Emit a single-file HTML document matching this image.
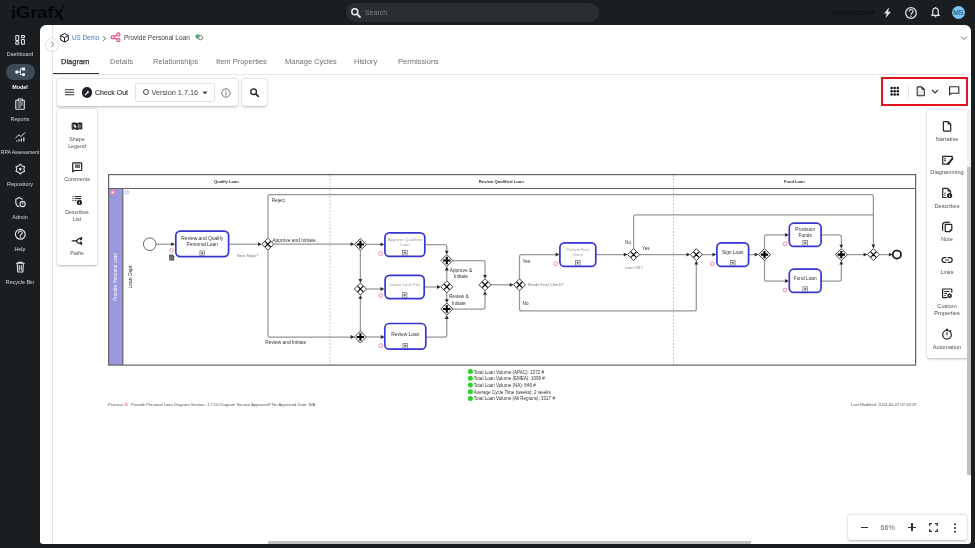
<!DOCTYPE html>
<html><head><meta charset="utf-8">
<style>
*{margin:0;padding:0;box-sizing:border-box}
html,body{width:975px;height:548px;overflow:hidden;background:#1b1e20;font-family:"Liberation Sans",sans-serif}
.a{position:absolute}
.t{position:absolute;white-space:nowrap;line-height:1}
.side{position:absolute;color:#d5d8dc;font-size:5.4px;text-align:center;width:40px;left:0;line-height:1;white-space:nowrap}
.tab{position:absolute;white-space:nowrap;line-height:1;font-size:7.5px;color:#6b6f75;top:58.1px}
.card{position:absolute;background:#fff;border-radius:3px;box-shadow:0 .8px 2.5px rgba(0,0,0,.3)}
.tl{position:absolute;font-size:5px;color:#4a4d52;text-align:center;line-height:7px;white-space:nowrap}
svg{position:absolute;overflow:visible}
#root{position:absolute;left:0;top:0;width:975px;height:548px;will-change:transform}
</style></head><body><div id="root">
<!-- ===== top bar ===== -->
<div class="t" style="left:10.8px;top:5px;font-size:16px;font-weight:bold;color:#050607;transform:scaleX(1.14);transform-origin:0 0">iGrafx</div>
<svg style="left:0;top:0" width="80" height="25" viewBox="0 0 80 25"><circle cx="63.3" cy="6.2" r="1.2" fill="#060708"/><path d="M59.5 16.5l3.2 4" stroke="#060708" stroke-width="2"/></svg>
<div class="a" style="left:346px;top:3px;width:253px;height:19px;border-radius:10px;background:#2a2e31"></div>
<svg style="left:350px;top:6.8px" width="12" height="12" viewBox="0 0 12 12"><circle cx="4.8" cy="4.8" r="3" fill="none" stroke="#e6e8ea" stroke-width="1.5"/><path d="M7 7l3 3" stroke="#e6e8ea" stroke-width="1.8" stroke-linecap="round"/></svg>
<div class="t" style="left:365px;top:8.8px;font-size:7px;color:#7d8186">Search</div>
<div class="t" style="left:832.5px;top:10.3px;font-size:6.3px;color:#0a0b0c">Give Feedback</div>
<svg style="left:883.5px;top:8px" width="7" height="9.5" viewBox="0 0 7 9.5"><path d="M4.6.2L.6 5.3h2.6L2 9.3 6.4 4H3.8z" fill="#e8eaec" stroke="#e8eaec" stroke-width=".5" stroke-linejoin="round"/></svg>
<svg style="left:904.1px;top:5.8px" width="14" height="14" viewBox="0 0 14 14"><circle cx="7" cy="7" r="5.3" fill="none" stroke="#e0e2e4" stroke-width="1.3"/><path d="M5.2 5.6a1.9 1.9 0 1 1 2.6 1.6c-.6.3-.8.6-.8 1.2v.4" fill="none" stroke="#e0e2e4" stroke-width="1.2"/><circle cx="7" cy="10.2" r=".75" fill="#e0e2e4"/></svg>
<svg style="left:931px;top:7px" width="9" height="11" viewBox="0 0 9 11"><path d="M4.5 1c-1.7 0-2.7 1.3-2.7 3.1v3L.7 8.4h7.6L7.2 7.1v-3C7.2 2.3 6.2 1 4.5 1z" fill="none" stroke="#e6e8ea" stroke-width="1.2" stroke-linejoin="round"/><path d="M3.4 9.3a1.1 1.1 0 0 0 2.2 0z" fill="#e6e8ea"/><circle cx="4.5" cy=".7" r=".6" fill="#e6e8ea"/></svg>
<div class="a" style="left:951.8px;top:6.1px;width:13px;height:13px;border-radius:50%;background:#7cc4f0"></div>
<div class="t" style="left:951.8px;top:9.6px;width:13px;text-align:center;font-size:6.6px;color:#2a5a80;-webkit-text-stroke:.15px #2a5a80">MS</div>

<!-- ===== sidebar ===== -->
<svg style="left:0;top:0" width="40" height="300" viewBox="0 0 40 300"><g fill="none" stroke="#e8eaec" stroke-width="1.05"><rect x="15.8" y="35.5" width="2.9" height="4.9" rx=".5"/><rect x="21.5" y="35.5" width="2.9" height="2.3" rx=".5"/><rect x="15.8" y="41.7" width="2.9" height="2.5" rx=".5"/><rect x="21.5" y="39.4" width="2.9" height="4.8" rx=".5"/></g></svg>
<svg style="left:0;top:0" width="40" height="300" viewBox="0 0 40 300"><g fill="none" stroke="#e4e6e9" stroke-width="1.1" stroke-linejoin="round" stroke-linecap="round">
<path d="M16.3 100.2h1.8M22.5 100.2h1.8v8.5a.5.5 0 0 1-.5.5h-7.5a.5.5 0 0 1-.5-.5v-8.5"/><rect x="18.2" y="99" width="4.2" height="2" rx=".4"/>
<path d="M18 103h4.6M18 105h4.6M18 107h2.8" stroke-width=".9"/>
<path d="M15.8 137.8l3-3 2.2 1.8 3.8-3.9" stroke-width="1"/>
<path d="M16.6 141.6v-1.2M19 141.6v-2.4M21.4 141.6v-3M23.8 141.6v-4.4" stroke-width="1.2" stroke-linecap="butt"/>
<path d="M20.30 164.20L22.10 165.98L24.54 166.65L23.90 169.10L24.54 171.55L22.10 172.22L20.30 174.00L18.50 172.22L16.06 171.55L16.70 169.10L16.06 166.65L18.50 165.98z"/>
<path d="M22.3 199.2l-3-1.6-3.5 1.6v3.2c0 2.2 1.3 3.6 3.1 4.3"/><circle cx="22.6" cy="204" r="2.6"/>
<circle cx="20.3" cy="234.3" r="4.9" stroke-width="1.2"/>
<path d="M18.5 232.9a1.85 1.85 0 1 1 2.5 1.7c-.5.2-.7.5-.7 1v.5" stroke-width="1.1"/>
<path d="M16.3 263.3h8M18.4 263.3v-1h3.8v1M17.2 263.3l.5 8.6h5.2l.5-8.6M19.3 265.5v4.5M21.3 265.5v4.5" stroke-width="1.05"/>
</g><g fill="#e4e6e9"><circle cx="20.3" cy="169.1" r="1.3"/><circle cx="20.3" cy="237.3" r=".65"/><circle cx="22.6" cy="203.5" r=".8"/></g></svg>
<div class="side" style="top:51.5px">Dashboard</div>
<div class="a" style="left:6px;top:63.7px;width:28.7px;height:16.4px;border-radius:8.2px;background:#3d4d58"></div>
<svg style="left:0;top:0" width="40" height="100" viewBox="0 0 40 100"><g fill="#eef0f2"><circle cx="16.8" cy="72" r="1.7"/><rect x="22" y="67.4" width="3.1" height="3" rx=".3"/><circle cx="23.6" cy="74.6" r="1.6"/></g><path d="M16.8 72H20.3M20.3 68.9V74.6M20.3 68.9H22M20.3 74.6H22" stroke="#eef0f2" stroke-width="1" fill="none"/></svg>

<div class="side" style="top:84.5px;font-weight:bold;color:#f2f3f5">Model</div>
<div class="side" style="top:117px">Reports</div>
<div class="side" style="top:149.8px;left:-10px;width:60px;font-size:5.05px">RPA Assessment</div>
<div class="side" style="top:182px">Repository</div>
<div class="side" style="top:215px">Admin</div>
<div class="side" style="top:247px">Help</div>
<div class="side" style="top:279.5px">Recycle Bin</div>

<!-- ===== main panel ===== -->
<div class="a" style="left:40.4px;top:25px;width:930.6px;height:518.8px;background:#fff;border-radius:6px 6px 3px 3px"></div>
<div class="a" style="left:52.2px;top:25px;width:.8px;height:518.8px;background:#e2e4e8"></div>
<!-- DIAGRAM -->
<svg style="left:0;top:0" width="975" height="548" viewBox="0 0 975 548">
<rect x="108.8" y="188.5" width="14" height="176.5" fill="#9b98e0"/>
<g stroke="#b0b0b0" stroke-width=".8" stroke-dasharray="1.8 1.7"><path d="M330 175v190M673.5 175v190"/></g>
<g fill="none" stroke="#626262" stroke-width="1.2"><rect x="108.6" y="174.6" width="807" height="190.5"/><path d="M108.6 188.5h807M122.8 188.5v176.6"/></g>
<g font-family="Liberation Sans" font-weight="bold" font-size="4.1" fill="#333" text-anchor="middle"><text x="226.4" y="183.2">Qualify Loan</text><text x="501.3" y="183.3" font-size="4.23">Review Qualified Loan</text><text x="794.4" y="183.2">Fund Loan</text></g>
<text transform="translate(117.4 277) rotate(-90)" font-family="Liberation Sans" font-size="4.75" fill="#fff" text-anchor="middle">Provide Personal Loan</text>
<text transform="translate(132 277) rotate(-90)" font-family="Liberation Sans" font-size="4.95" fill="#222" text-anchor="middle">Loan Dept</text>
<circle cx="112.8" cy="192.4" r="2.3" fill="#f4a3b8" stroke="#ee6a8c" stroke-width=".6"/><path d="M111.8 191.2l2 1.2-2 1.2z" fill="#fff"/><circle cx="126.9" cy="192.4" r="2" fill="#dce9fc" stroke="#9fc3f5" stroke-width=".7"/>
<g fill="none" stroke="#979797" stroke-width="1.25"><path d="M156 244.2H172"/><path d="M229.4 244.2H258.8"/><path d="M274 244.2H351.5"/><path d="M268 238V196.5q0-2 2-2H871.4q2 0 2 2V245.5"/><path d="M268 250.4V335q0 2 2 2H351.5"/><path d="M366.4 244.4H381.3"/><path d="M360.4 250.6V280"/><path d="M360.4 331V297.8"/><path d="M366.4 289H381.3"/><path d="M366.4 337H381.6"/><path d="M424.9 244.6H444.8q2 0 2 2V251.5"/><path d="M424.9 287H437.8"/><path d="M446.8 280.6V269.5"/><path d="M446.8 292.6V300"/><path d="M426 337H444.8q2 0 2-2V318"/><path d="M452.8 260.5H483q2 0 2 2V275.8"/><path d="M452.8 309H483q2 0 2-2V293.8"/><path d="M491 284.8H510.5"/><path d="M519.5 278.8V256.6q0-2 2-2H556.5"/><path d="M519.5 290.8V308.9q0 2 2 2H694.3q2 0 2-2V263.6"/><path d="M596.1 254.6H624.6"/><path d="M633.6 248.6V216.8q0-2 2-2H873.4"/><path d="M639.6 254.6H687.3"/><path d="M702.3 254.6H713.3"/><path d="M748.8 254.6H755.5"/><path d="M764.5 248.6V236.9q0-2 2-2H785.9"/><path d="M764.5 260.6V279q0 2 2 2H785.9"/><path d="M821.4 234.9H839.3q2 0 2 2V245.6"/><path d="M821.4 281H839.3q2 0 2-2V263.6"/><path d="M847.3 254.6H864.4"/><path d="M879.4 254.6H889.7"/></g>
<path fill="#2a2a2a" d="M175 244.2l-3.8-1.9v3.8zM261.8 244.2l-3.8-1.9v3.8zM354.5 244.2l-3.8-1.9v3.8zM873.4 248.4l-1.9-3.8h3.8zM354.5 337l-3.8-1.9v3.8zM384.3 244.4l-3.8-1.9v3.8zM360.4 282.9l-1.9-3.8h3.8zM360.4 295l-1.9 3.8h3.8zM384.3 289l-3.8-1.9v3.8zM384.6 337l-3.8-1.9v3.8zM446.8 254.5l-1.9-3.8h3.8zM440.8 287l-3.8-1.9v3.8zM446.8 266.6l-1.9 3.8h3.8zM446.8 303l-1.9-3.8h3.8zM446.8 315.1l-1.9 3.8h3.8zM485 278.8l-1.9-3.8h3.8zM485 290.9l-1.9 3.8h3.8zM513.5 284.8l-3.8-1.9v3.8zM559.5 254.6l-3.8-1.9v3.8zM696.3 260.7l-1.9 3.8h3.8zM627.6 254.6l-3.8-1.9v3.8zM690.3 254.6l-3.8-1.9v3.8zM716.3 254.6l-3.8-1.9v3.8zM758.5 254.6l-3.8-1.9v3.8zM788.9 234.9l-3.8-1.9v3.8zM788.9 281l-3.8-1.9v3.8zM841.3 248.6l-1.9-3.8h3.8zM841.3 260.7l-1.9 3.8h3.8zM867.4 254.6l-3.8-1.9v3.8zM892.7 254.6l-3.8-1.9v3.8z"/>
<circle cx="149.7" cy="244.2" r="6.3" fill="#fff" stroke="#555" stroke-width=".9"/>
<circle cx="896.9" cy="254.6" r="4.1" fill="#fff" stroke="#111" stroke-width="1.7"/>
<path d="M267.8 238.2l6 6-6 6-6-6z" fill="#fff" stroke="#444" stroke-width="1"/>
<path d="M265.0 241.39999999999998l5.6 5.6M270.6 241.39999999999998l-5.6 5.6" stroke="#000" stroke-width="1.15"/>
<path d="M360.4 238.5l6 6-6 6-6-6z" fill="#fff" stroke="#444" stroke-width="1"/>
<path d="M356.7 244.5h7.4M360.4 240.8v7.4" stroke="#000" stroke-width="2.1"/>
<path d="M360.4 283l6 6-6 6-6-6z" fill="#fff" stroke="#444" stroke-width="1"/>
<path d="M357.59999999999997 286.2l5.6 5.6M363.2 286.2l-5.6 5.6" stroke="#000" stroke-width="1.15"/>
<path d="M360.4 331l6 6-6 6-6-6z" fill="#fff" stroke="#444" stroke-width="1"/>
<path d="M356.7 337h7.4M360.4 333.3v7.4" stroke="#000" stroke-width="2.1"/>
<path d="M446.8 254.5l6 6-6 6-6-6z" fill="#fff" stroke="#444" stroke-width="1"/>
<path d="M443.1 260.5h7.4M446.8 256.8v7.4" stroke="#000" stroke-width="2.1"/>
<path d="M446.8 280.8l6 6-6 6-6-6z" fill="#fff" stroke="#444" stroke-width="1"/>
<path d="M444.0 284.0l5.6 5.6M449.6 284.0l-5.6 5.6" stroke="#000" stroke-width="1.15"/>
<path d="M446.8 303l6 6-6 6-6-6z" fill="#fff" stroke="#444" stroke-width="1"/>
<path d="M443.1 309h7.4M446.8 305.3v7.4" stroke="#000" stroke-width="2.1"/>
<path d="M485 278.8l6 6-6 6-6-6z" fill="#fff" stroke="#444" stroke-width="1"/>
<path d="M482.2 282.0l5.6 5.6M487.8 282.0l-5.6 5.6" stroke="#000" stroke-width="1.15"/>
<path d="M519.5 278.8l6 6-6 6-6-6z" fill="#fff" stroke="#444" stroke-width="1"/>
<path d="M516.7 282.0l5.6 5.6M522.3 282.0l-5.6 5.6" stroke="#000" stroke-width="1.15"/>
<path d="M633.6 248.6l6 6-6 6-6-6z" fill="#fff" stroke="#444" stroke-width="1"/>
<path d="M630.8000000000001 251.79999999999998l5.6 5.6M636.4 251.79999999999998l-5.6 5.6" stroke="#000" stroke-width="1.15"/>
<path d="M696.3 248.6l6 6-6 6-6-6z" fill="#fff" stroke="#444" stroke-width="1"/>
<path d="M693.5 251.79999999999998l5.6 5.6M699.0999999999999 251.79999999999998l-5.6 5.6" stroke="#000" stroke-width="1.15"/>
<path d="M764.5 248.6l6 6-6 6-6-6z" fill="#fff" stroke="#444" stroke-width="1"/>
<path d="M760.8 254.6h7.4M764.5 250.9v7.4" stroke="#000" stroke-width="2.1"/>
<path d="M841.3 248.6l6 6-6 6-6-6z" fill="#fff" stroke="#444" stroke-width="1"/>
<path d="M837.5999999999999 254.6h7.4M841.3 250.9v7.4" stroke="#000" stroke-width="2.1"/>
<path d="M873.4 248.6l6 6-6 6-6-6z" fill="#fff" stroke="#444" stroke-width="1"/>
<path d="M870.6 251.79999999999998l5.6 5.6M876.1999999999999 251.79999999999998l-5.6 5.6" stroke="#000" stroke-width="1.15"/>
<rect x="175.8" y="231.10000000000002" width="52.800000000000004" height="25.499999999999964" rx="4.5" fill="#fff" stroke="#3636d2" stroke-width="1.7"/>
<text x="202.2" y="239.9" font-family="Liberation Sans" font-size="4.9" fill="#333" text-anchor="middle">Review and Qualify</text>
<text x="202.2" y="245.8" font-family="Liberation Sans" font-size="4.9" fill="#333" text-anchor="middle">Personal Loan</text>
<rect x="199.89999999999998" y="251.0" width="4.6" height="4.6" fill="#fff" stroke="#6a6a6a" stroke-width=".7"/><path d="M200.89999999999998 253.3h2.6M202.2 252.0v2.6" stroke="#333" stroke-width=".7"/>
<rect x="384.90000000000003" y="232.9" width="39.9" height="23.499999999999993" rx="4.5" fill="#fff" stroke="#3636d2" stroke-width="1.7"/>
<text x="404.85" y="241.2" font-family="Liberation Sans" font-size="4.3" fill="#a0a0a0" text-anchor="middle">Approve Qualified</text>
<text x="404.85" y="246.1" font-family="Liberation Sans" font-size="4.3" fill="#a0a0a0" text-anchor="middle">Loan</text>
<rect x="402.55" y="250.5" width="4.6" height="4.6" fill="#fff" stroke="#6a6a6a" stroke-width=".7"/><path d="M403.55 252.8h2.6M404.85 251.5v2.6" stroke="#333" stroke-width=".7"/>
<rect x="385.1" y="275.3" width="39.09999999999999" height="23.299999999999976" rx="4.5" fill="#fff" stroke="#3636d2" stroke-width="1.7"/>
<text x="404.65" y="285.9" font-family="Liberation Sans" font-size="4.18" fill="#a0a0a0" text-anchor="middle">Initiate Loan File</text>
<rect x="402.34999999999997" y="292.7" width="4.6" height="4.6" fill="#fff" stroke="#6a6a6a" stroke-width=".7"/><path d="M403.34999999999997 295h2.6M404.65 293.7v2.6" stroke="#333" stroke-width=".7"/>
<rect x="384.8" y="323.5" width="41.00000000000002" height="25.70000000000001" rx="4.5" fill="#fff" stroke="#3636d2" stroke-width="1.7"/>
<text x="405.3" y="335.6" font-family="Liberation Sans" font-size="4.9" fill="#333" text-anchor="middle">Review Loan</text>
<rect x="403.0" y="343.4" width="4.6" height="4.6" fill="#fff" stroke="#6a6a6a" stroke-width=".7"/><path d="M404.0 345.7h2.6M405.3 344.4v2.6" stroke="#333" stroke-width=".7"/>
<rect x="559.9" y="242.9" width="35.9" height="23.499999999999993" rx="4.5" fill="#fff" stroke="#3636d2" stroke-width="1.7"/>
<text x="577.85" y="250.8" font-family="Liberation Sans" font-size="3.8" fill="#a0a0a0" text-anchor="middle">Perform Final</text>
<text x="577.85" y="255.9" font-family="Liberation Sans" font-size="3.8" fill="#a0a0a0" text-anchor="middle">Check</text>
<rect x="575.5500000000001" y="260.5" width="4.6" height="4.6" fill="#fff" stroke="#6a6a6a" stroke-width=".7"/><path d="M576.5500000000001 262.8h2.6M577.85 261.5v2.6" stroke="#333" stroke-width=".7"/>
<rect x="716.9" y="242.9" width="31.699999999999953" height="23.499999999999993" rx="4.5" fill="#fff" stroke="#3636d2" stroke-width="1.7"/>
<text x="732.75" y="253.7" font-family="Liberation Sans" font-size="4.8" fill="#333" text-anchor="middle">Sign Loan</text>
<rect x="730.45" y="260.5" width="4.6" height="4.6" fill="#fff" stroke="#6a6a6a" stroke-width=".7"/><path d="M731.45 262.8h2.6M732.75 261.5v2.6" stroke="#333" stroke-width=".7"/>
<rect x="789.3" y="223.20000000000002" width="31.799999999999976" height="23.19999999999998" rx="4.5" fill="#fff" stroke="#3636d2" stroke-width="1.7"/>
<text x="805.2" y="230.7" font-family="Liberation Sans" font-size="4.8" fill="#333" text-anchor="middle">Provision</text>
<text x="805.2" y="236.8" font-family="Liberation Sans" font-size="4.8" fill="#333" text-anchor="middle">Funds</text>
<rect x="802.9000000000001" y="240.5" width="4.6" height="4.6" fill="#fff" stroke="#6a6a6a" stroke-width=".7"/><path d="M803.9000000000001 242.8h2.6M805.2 241.5v2.6" stroke="#333" stroke-width=".7"/>
<rect x="789.3" y="269.2" width="31.799999999999976" height="23.20000000000001" rx="4.5" fill="#fff" stroke="#3636d2" stroke-width="1.7"/>
<text x="805.2" y="279.8" font-family="Liberation Sans" font-size="4.8" fill="#333" text-anchor="middle">Fund Loan</text>
<rect x="802.9000000000001" y="286.8" width="4.6" height="4.6" fill="#fff" stroke="#6a6a6a" stroke-width=".7"/><path d="M803.9000000000001 289.1h2.6M805.2 287.8v2.6" stroke="#333" stroke-width=".7"/>
<circle cx="171.4" cy="250.5" r="1.9" fill="none" stroke="#f27aa0" stroke-width=".85"/>
<circle cx="380.6" cy="253.5" r="1.9" fill="none" stroke="#f27aa0" stroke-width=".85"/>
<circle cx="380.6" cy="295.5" r="1.9" fill="none" stroke="#f27aa0" stroke-width=".85"/>
<circle cx="380.6" cy="345.6" r="1.9" fill="none" stroke="#f27aa0" stroke-width=".85"/>
<circle cx="555.5" cy="263.8" r="1.9" fill="none" stroke="#f27aa0" stroke-width=".85"/>
<circle cx="712.3" cy="263.8" r="1.9" fill="none" stroke="#f27aa0" stroke-width=".85"/>
<circle cx="785" cy="243.7" r="1.9" fill="none" stroke="#f27aa0" stroke-width=".85"/>
<circle cx="785" cy="290" r="1.9" fill="none" stroke="#f27aa0" stroke-width=".85"/>
<path d="M169.2 254.6h3.4l1.6 1.6v4.4h-5z" fill="#555"/><path d="M170.2 257h2.8M170.2 258.5h2.8" stroke="#ccc" stroke-width=".4"/>
<text x="237" y="256.5" font-family="Liberation Sans" font-size="3.95" fill="#777" text-anchor="start">Next Steps?</text>
<text x="271.8" y="202.3" font-family="Liberation Sans" font-size="4.6" fill="#333" text-anchor="start">Reject</text>
<text x="272.2" y="242.4" font-family="Liberation Sans" font-size="4.9" fill="#333" text-anchor="start">Approve and Initiate</text>
<text x="265.3" y="343.9" font-family="Liberation Sans" font-size="4.85" fill="#333" text-anchor="start">Review and Initiate</text>
<text x="460.9" y="272.1" font-family="Liberation Sans" font-size="4.8" fill="#333" text-anchor="middle">Approve &amp;</text>
<text x="460.9" y="278.4" font-family="Liberation Sans" font-size="4.8" fill="#333" text-anchor="middle">Initiate</text>
<text x="458.8" y="298.4" font-family="Liberation Sans" font-size="4.7" fill="#333" text-anchor="middle">Review &amp;</text>
<text x="458.8" y="304.5" font-family="Liberation Sans" font-size="4.7" fill="#333" text-anchor="middle">Initiate</text>
<text x="522.6" y="263" font-family="Liberation Sans" font-size="4.7" fill="#333" text-anchor="start">Yes</text>
<text x="522.6" y="304.9" font-family="Liberation Sans" font-size="4.7" fill="#333" text-anchor="start">No</text>
<text x="527.8" y="286.3" font-family="Liberation Sans" font-size="3.95" fill="#777" text-anchor="start">Needs Final Check?</text>
<text x="625" y="244.3" font-family="Liberation Sans" font-size="4.7" fill="#333" text-anchor="start">No</text>
<text x="642" y="250.4" font-family="Liberation Sans" font-size="4.7" fill="#333" text-anchor="start">Yes</text>
<text x="633.8" y="268.5" font-family="Liberation Sans" font-size="3.92" fill="#777" text-anchor="middle">Loan OK?</text>
<circle cx="470.4" cy="371.60" r="2.5" fill="#2ad42a"/>
<text x="473.8" y="373.5" font-family="Liberation Sans" font-size="4.55" fill="#333" text-anchor="start">Total Loan Volume (APAC): 1372 #</text>
<circle cx="470.4" cy="378.30" r="2.5" fill="#2ad42a"/>
<text x="473.8" y="380.2" font-family="Liberation Sans" font-size="4.55" fill="#333" text-anchor="start">Total Loan Volume (EMEA): 1099 #</text>
<circle cx="470.4" cy="385.00" r="2.5" fill="#2ad42a"/>
<text x="473.8" y="386.9" font-family="Liberation Sans" font-size="4.55" fill="#333" text-anchor="start">Total Loan Volume (NA): 846 #</text>
<circle cx="470.4" cy="391.70" r="2.5" fill="#2ad42a"/>
<text x="473.8" y="393.6" font-family="Liberation Sans" font-size="4.55" fill="#333" text-anchor="start">Average Cycle Time (weeks): 2 weeks</text>
<circle cx="470.4" cy="398.40" r="2.5" fill="#2ad42a"/>
<text x="473.8" y="400.3" font-family="Liberation Sans" font-size="4.55" fill="#333" text-anchor="start">Total Loan Volume (All Regions): 3317 #</text>
<text x="108.3" y="406.2" font-family="Liberation Sans" font-size="4.1" fill="#555" text-anchor="start">Process:</text>
<circle cx="126.2" cy="404.6" r="1.2" fill="none" stroke="#f05080" stroke-width=".7"/>
<text x="131" y="406.2" font-family="Liberation Sans" font-size="4.15" fill="#555" text-anchor="start">Provide Personal Loan Diagram Version: 1.7.16 Diagram Version Approved? No Approved Date: N/A</text>
<text x="916.6" y="406.2" font-family="Liberation Sans" font-size="4.15" fill="#555" text-anchor="end">Last Modified: 2024-05-07 07:26:29</text>
</svg>
<!-- /DIAGRAM -->
<div class="a" style="left:45px;top:37.5px;width:14px;height:14px;border-radius:50%;background:#fff;border:1px solid #dfe1e5"></div>
<svg style="left:49px;top:41px" width="7" height="7" viewBox="0 0 7 7"><path d="M2.3 1l2.6 2.5L2.3 6" fill="none" stroke="#5f6fa0" stroke-width="1"/></svg>
<!-- breadcrumb -->
<svg style="left:59.5px;top:33px" width="9" height="9.5" viewBox="0 0 9 9.5"><path d="M4.5 .6L8.3 2.6v4.4L4.5 9 .7 7V2.6zM.7 2.6l3.8 2.1 3.8-2.1M4.5 4.7V9" fill="none" stroke="#1d1f22" stroke-width="1"/></svg>
<div class="t" style="left:72px;top:34.5px;font-size:6.3px;color:#3b7dc4">US Demo</div>
<svg style="left:102px;top:34.5px" width="5" height="7" viewBox="0 0 5 7"><path d="M1.2 1l2.4 2.5L1.2 6" fill="none" stroke="#555" stroke-width=".9"/></svg>
<svg style="left:0;top:0" width="975" height="548" viewBox="0 0 975 548"><g fill="none" stroke="#ea4f86" stroke-width="1.25"><circle cx="112.8" cy="37.2" r="1.55"/><circle cx="118.4" cy="34.3" r="1.55"/><circle cx="118.4" cy="40.1" r="1.55"/><path d="M114.2 36.5l2.8-1.5M114.2 37.9l2.8 1.5"/></g><circle cx="197.7" cy="36.5" r="2.3" fill="#3dba6a"/><circle cx="200.6" cy="37.7" r="2.1" fill="#fff" stroke="#777" stroke-width="1"/></svg>
<div class="t" style="left:124px;top:34.5px;font-size:6.5px;color:#3a3d42">Provide Personal Loan</div>

<svg style="left:959.6px;top:35px" width="8" height="6" viewBox="0 0 8 6"><path d="M1 1.5l3 3 3-3" fill="none" stroke="#777" stroke-width="1"/></svg>
<!-- tabs -->
<div class="tab" style="left:61px;color:#2e3135;-webkit-text-stroke:.25px #2e3135">Diagram</div>
<div class="tab" style="left:110px">Details</div>
<div class="tab" style="left:153px">Relationships</div>
<div class="tab" style="left:216px">Item Properties</div>
<div class="tab" style="left:285px">Manage Cycles</div>
<div class="tab" style="left:354px">History</div>
<div class="tab" style="left:398px">Permissions</div>
<div class="a" style="left:53px;top:74px;width:918px;height:1px;background:#e3e5e8"></div>
<div class="a" style="left:53px;top:72.5px;width:46px;height:1.5px;background:#2e3135"></div>

<!-- toolbar -->
<div class="card" style="left:57px;top:78.5px;width:181px;height:27px"></div>
<svg style="left:0;top:0" width="300" height="110" viewBox="0 0 300 110"><path d="M64.9 89.7h9.3M64.9 92.2h9.3M64.9 94.7h9.3" stroke="#2e3034" stroke-width="1.05"/></svg>
<div class="a" style="left:81.5px;top:87px;width:10.5px;height:10.5px;border-radius:50%;background:#1f2226"></div>
<svg style="left:83px;top:88.5px" width="8" height="8" viewBox="0 0 8 8"><path d="M2 6l3.2-3.2M4.3 2.2l1.5 1.5" stroke="#fff" stroke-width="1.2"/></svg>
<div class="t" style="left:95px;top:88.6px;font-size:7px;color:#2b2e32;-webkit-text-stroke:.12px #2b2e32">Check Out</div>
<div class="a" style="left:134.5px;top:82.5px;width:80px;height:19px;border:1px solid #e0e2e5;border-radius:2px"></div>
<div class="a" style="left:142.5px;top:89px;width:6px;height:6px;border-radius:50%;border:1px solid #444"></div>
<div class="t" style="left:151.5px;top:88.5px;font-size:7.3px;color:#3a3d42">Version 1.7.16</div>
<svg style="left:202px;top:90.6px" width="6" height="4" viewBox="0 0 6 4"><path d="M.5 .5h5L3 3.5z" fill="#444"/></svg>
<svg style="left:221px;top:87.5px" width="10" height="10" viewBox="0 0 10 10"><circle cx="5" cy="5" r="4.2" fill="none" stroke="#666" stroke-width=".9"/><path d="M5 4.3v3.2" stroke="#666" stroke-width="1"/><circle cx="5" cy="2.8" r=".6" fill="#666"/></svg>
<div class="card" style="left:242px;top:78.5px;width:25px;height:27px"></div>
<svg style="left:0;top:0" width="300" height="110" viewBox="0 0 300 110"><circle cx="253.6" cy="91.7" r="2.85" fill="none" stroke="#222" stroke-width="1.35"/><path d="M255.8 93.9l2.5 2.5" stroke="#222" stroke-width="1.6" stroke-linecap="round"/></svg>

<!-- right toolbar w/ red box -->
<div class="a" style="left:881px;top:76.7px;width:87px;height:29.3px;border:2.7px solid #e3141f"></div>
<svg style="left:889px;top:86px" width="11" height="11" viewBox="0 0 11 11"><g fill="#111"><circle cx="2.6" cy="2.1" r="1.25"/><circle cx="5.7" cy="2.1" r="1.25"/><circle cx="8.8" cy="2.1" r="1.25"/><circle cx="2.6" cy="5.3" r="1.25"/><circle cx="5.7" cy="5.3" r="1.25"/><circle cx="8.8" cy="5.3" r="1.25"/><circle cx="2.6" cy="8.4" r="1.25"/><circle cx="5.7" cy="8.4" r="1.25"/><circle cx="8.8" cy="8.4" r="1.25"/></g></svg>
<div class="a" style="left:907.5px;top:85px;width:.8px;height:12.5px;background:#e2e4e7"></div>
<svg style="left:0;top:0" width="975" height="548" viewBox="0 0 975 548"><path d="M917.8 86.9h3.9l2.6 2.6v5.6a.6.6 0 0 1-.6.6h-5.9a.6.6 0 0 1-.6-.6v-7.6a.6.6 0 0 1 .6-.6z" fill="#fff" stroke="#2a2d31" stroke-width="1.1" stroke-linejoin="round"/><path d="M921.5 86.9v2.8h2.8z" fill="#1f2226"/><path d="M918.3 90h1M918.3 92.8l1.6-1.3 1.2.8 1.7-1.3M918.3 94.6h4.8" fill="none" stroke="#aaa" stroke-width=".8"/></svg>
<svg style="left:931px;top:89px" width="8" height="5" viewBox="0 0 8 5"><path d="M1 1l3 3 3-3" fill="none" stroke="#333" stroke-width="1.1"/></svg>
<svg style="left:0;top:0" width="975" height="548" viewBox="0 0 975 548"><path d="M949.6 86.7h9.2v6.6h-7.3l-1.9 1.6z" fill="none" stroke="#2a2d31" stroke-width="1.15" stroke-linejoin="round"/></svg>

<!-- left tools card -->
<div class="card" style="left:56.6px;top:109.4px;width:40.8px;height:155.6px"></div>
<div class="tl" style="left:57px;width:40px;font-size:5.3px;top:135.5px">Shape<br>Legend</div>
<div class="tl" style="left:57px;width:40px;font-size:5.3px;top:176px">Comments</div>
<div class="tl" style="left:57px;width:40px;font-size:5.3px;top:209px">Describes<br>List</div>
<div class="tl" style="left:57px;width:40px;font-size:5.3px;top:249.5px">Paths</div>

<!-- right tools card -->
<div class="card" style="left:927px;top:109.5px;width:42px;height:248px"></div>
<div class="tl" style="left:927px;width:40px;font-size:5.6px;line-height:6.8px;top:135.5px">Narrative</div>
<div class="tl" style="left:927px;width:40px;font-size:5.6px;line-height:6.8px;top:168.5px">Diagramming</div>
<div class="tl" style="left:927px;width:40px;font-size:5.6px;line-height:6.8px;top:202.5px">Describes</div>
<div class="tl" style="left:927px;width:40px;font-size:5.6px;line-height:6.8px;top:235.5px">Note</div>
<div class="tl" style="left:927px;width:40px;font-size:5.6px;line-height:6.8px;top:269px">Links</div>
<div class="tl" style="left:927px;width:40px;font-size:5.6px;line-height:6.8px;top:303px">Custom<br>Properties</div>
<div class="tl" style="left:927px;width:40px;font-size:5.6px;line-height:6.8px;top:343.5px">Automation</div>

<svg style="left:0;top:0" width="975" height="548" viewBox="0 0 975 548">
<g fill="none" stroke="#1f2226" stroke-width="1.2" stroke-linejoin="round" stroke-linecap="round">
<!-- shape legend -->
<path d="M72.5 123.2q2.4-.9 4.7.4q2.4-1.3 4.6-.4v5.9q-2.2-.8-4.6.4q-2.3-1.2-4.7-.4z" fill="#1f2226" stroke-width="1"/>
<!-- comments -->
<path d="M73.4 162.8h7.6a.7.7 0 0 1 .7.7v6.3a.7.7 0 0 1-.7.7h-6.6l-1.7 1.3v-8.3a.7.7 0 0 1 .7-.7z"/>
<!-- describes list -->
<path d="M72.8 196.6h.4M75.2 196.6h5.6M72.8 198.6h.4M75.2 198.6h5.6M72.8 200.6h.4M75.2 200.6h.8" stroke-width="1"/>
<!-- paths -->
<path d="M72.2 240.9h3.6l3.4-2.5M75.8 240.9l3.4 2.6" stroke-width="1.2"/>
<!-- narrative -->
<path d="M944 121.6h4.1l2.6 2.6v6.3a.6.6 0 0 1-.6.6h-6.1a.6.6 0 0 1-.6-.6v-8.3a.6.6 0 0 1 .6-.6z"/>
<!-- diagramming -->
<path d="M952.2 157.6v-1.3h-9.5v7.8h4.5"/>
<path d="M944.4 158.8h1.3M944.4 160.8h1.3" stroke-width="1"/>
<path d="M952.4 158.6l-3.6 4.6" stroke-width="1.9"/>
<!-- describes -->
<path d="M946.3 197.5h-3a.6.6 0 0 1-.6-.6v-8a.6.6 0 0 1 .6-.6h4.3l2.9 2.9v1.6"/>
<path d="M944.7 193.2h.7M944.7 195.2h.7" stroke-width="1"/>
<!-- note -->
<path d="M945.8 224.3h5.4a.6.6 0 0 1 .6.6v4.9l-1.9 1.9h-4.1a.6.6 0 0 1-.6-.6v-6.2a.6.6 0 0 1 .6-.6z"/>
<path d="M942.6 230.3v-5.3q0-2.4 2.6-2.6l4.4-.3"/>
<!-- links -->
<path d="M946 257.6h-1.6a2.4 2.4 0 0 0 0 4.8h1.6M948.2 257.6h1.6a2.4 2.4 0 0 1 0 4.8h-1.6M945.7 260h2.6" stroke-width="1.15"/>
<!-- custom properties -->
<path d="M946.8 297.6h-3.6a.6.6 0 0 1-.6-.6v-7.4a.6.6 0 0 1 .6-.6h8a.6.6 0 0 1 .6.6v2.6"/>
<path d="M944.8 291.5h4.2M944.8 293.5h1.8M944.8 295.5h.5" stroke-width="1"/>
<!-- automation -->
<circle cx="947" cy="334.8" r="4.3"/>
<path d="M947 332.8v1.8M950.3 331.2l.6-.6" stroke-width="1.2"/>
</g>
<g fill="#1f2226">
<circle cx="74.6" cy="125.6" r="1.1" fill="#fff"/><rect x="74.6" y="126.1" width="1.6" height="1.6" fill="#fff"/>
<path d="M78.3 124.2v4M80 124.2v4" stroke="#fff" stroke-width=".6"/>
<rect x="75" y="164.4" width="5" height="3.6" fill="#6a6d72"/>
<path d="M79.4 238.4l2.6-1 -1 2.8zM79.4 243.5l2.6 1-1-2.8z" stroke="#1f2226" stroke-width="1"/>
<circle cx="79.4" cy="202.4" r="2.6"/><path d="M79.4 201.9v1.9" stroke="#fff" stroke-width=".8"/><circle cx="79.4" cy="200.9" r=".4" fill="#fff"/>
<path d="M947.7 121.6v2.9h2.9z"/>
<circle cx="948.4" cy="163.6" r="1.3"/>
<path d="M947.6 188.3v3.1h3.1z"/>
<circle cx="949.6" cy="195.5" r="2.6"/><path d="M949.6 195v2" stroke="#fff" stroke-width=".8"/><circle cx="949.6" cy="193.9" r=".4" fill="#fff"/>
<path d="M951.8 229.6l-2.2 2.2v-2.2z"/>
<path d="M949.6 293.2l2.2 1.25v2.5l-2.2 1.25-2.2-1.25v-2.5z"/><circle cx="949.6" cy="295.7" r=".8" fill="#fff"/>
<rect x="945.9" y="328.7" width="2.2" height="1.6" rx=".4"/>
</g>
</svg>
<!-- scrollbars -->
<div class="a" style="left:967.3px;top:109px;width:3.3px;height:58px;background:#f0f0f0"></div>
<div class="a" style="left:967.3px;top:167.4px;width:3.3px;height:108px;background:#c1c1c1"></div>
<div class="a" style="left:967.3px;top:275.4px;width:3.3px;height:200px;background:#c1c1c1"></div>
<div class="a" style="left:268px;top:540.5px;width:483px;height:3px;background:#c1c1c1"></div>

<!-- zoom controls -->
<div class="card" style="left:847.6px;top:515px;width:119.4px;height:25px"></div>
<div class="a" style="left:860.8px;top:526.5px;width:7.6px;height:1.3px;background:#333"></div>
<div class="t" style="left:880.5px;top:523.5px;font-size:7.2px;color:#666">66%</div>
<div class="a" style="left:908.3px;top:526.5px;width:7.6px;height:1.3px;background:#333"></div>
<div class="a" style="left:911.45px;top:523.3px;width:1.3px;height:7.6px;background:#333"></div>
<svg style="left:929px;top:523px" width="9" height="9" viewBox="0 0 9 9"><path d="M.7 3V.7H3M6 .7h2.3V3M8.3 6v2.3H6M3 8.3H.7V6" fill="none" stroke="#333" stroke-width="1.2"/></svg>
<svg style="left:953px;top:522.5px" width="4" height="10" viewBox="0 0 4 10"><circle cx="2" cy="1.3" r="1" fill="#333"/><circle cx="2" cy="5" r="1" fill="#333"/><circle cx="2" cy="8.7" r="1" fill="#333"/></svg>


</div></body></html>
